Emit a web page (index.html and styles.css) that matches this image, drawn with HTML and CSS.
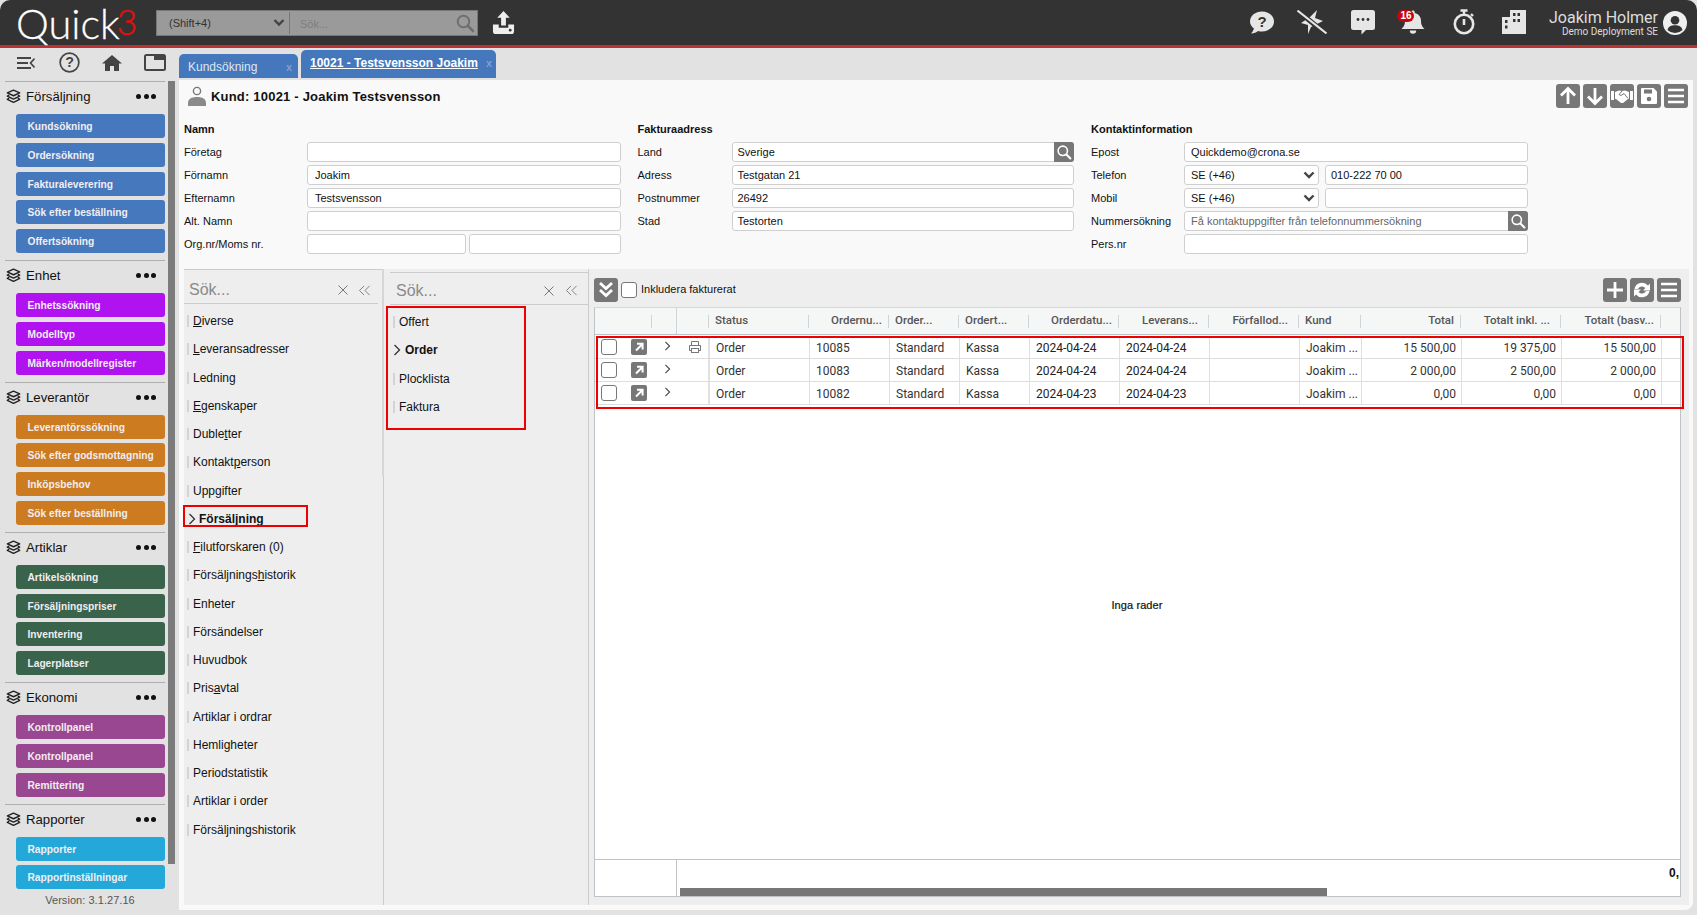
FILE: index.html
```html
<!DOCTYPE html>
<html lang="sv">
<head>
<meta charset="utf-8">
<title>Quick3</title>
<link rel="stylesheet" href="styles.css">
</head>
<body>
<svg class="defs" width="0" height="0" aria-hidden="true">
  <symbol id="layers" viewBox="0 0 16 16"><g fill="none" stroke="#222" stroke-width="1.5" stroke-linejoin="round"><path d="M8 1.2 14.6 4.2 8 7.2 1.4 4.2Z"/><path d="M3.4 6.4 1.4 7.6 8 10.7 14.6 7.6 12.6 6.4"/><path d="M3.4 9.8 1.4 11 8 14.2 14.6 11 12.6 9.8"/></g></symbol>
  <symbol id="chev" viewBox="0 0 8 12"><path d="M1.5 1 6.5 6 1.5 11" fill="none" stroke="currentColor" stroke-width="1.3"/></symbol>
  <symbol id="menu" viewBox="0 0 24 24"><path d="M4 6h16M4 12h16M4 18h16" stroke="#fff" stroke-width="2.4" fill="none"/></symbol>
  <symbol id="mag" viewBox="0 0 20 20"><circle cx="8.5" cy="8.5" r="5.8" fill="none" stroke="currentColor" stroke-width="2"/><path d="M13 13l5 5" stroke="currentColor" stroke-width="2.6" stroke-linecap="round"/></symbol>
  <symbol id="cross" viewBox="0 0 12 12"><path d="M1.5 1.5l9 9M10.5 1.5l-9 9" stroke="#777" stroke-width="1" fill="none"/></symbol>
  <symbol id="dbl" viewBox="0 0 14 12"><path d="M6.5 1 1.5 6l5 5M12.5 1l-5 5 5 5" stroke="#777" stroke-width="1" fill="none"/></symbol>
  <symbol id="selarrow" viewBox="0 0 12 8"><path d="M1.5 1.5 6 6l4.5-4.5" fill="none" stroke="#444" stroke-width="2.4"/></symbol>
  <symbol id="go" viewBox="0 0 16 16"><rect width="16" height="16" rx="2" fill="#777"/><path d="M5 11.5 11 5.5M6 4.8h5.6v5.6" stroke="#fff" stroke-width="2" fill="none"/></symbol>
</svg>

<header class="topbar">
  <div class="logo">Quick<span class="logo-3">3</span></div>
  <div class="search">
    <span class="search-scope">(Shift+4)</span>
    <svg class="search-arrow"><use href="#selarrow"/></svg>
    <span class="search-input">Sök...</span>
    <svg class="search-mag"><use href="#mag"/></svg>
  </div>
  <svg class="upload" viewBox="0 0 24 26"><path d="M12 1 5.5 8h4v8h5V8h4Z" fill="#eee"/><path d="M1 15h6v3.5h10V15h6v7a3 3 0 0 1-3 3H4a3 3 0 0 1-3-3Z" fill="#eee"/><circle cx="19" cy="21" r="1.4" fill="#333"/></svg>
  <div class="top-right">
    <svg class="ticon" viewBox="0 0 26 26"><path d="M13 2.500c6.600 0 12 4.300 12 10 0 5.600-5.400 10-12 10-1.400 0-2.700-.2-4-.6-1.600 1.300-3.800 2.300-7 2.500 1.500-1.400 2.600-3.200 2.900-4.900C2.500 17.700 1 15.300 1 12.500 1 6.800 6.400 2.500 13 2.500Z" fill="#e6e6e6"/><text x="13" y="18" class="ticon-q">?</text></svg>
    <svg class="ticon ticon-wide" viewBox="0 0 30 24"><path d="M20 0 18 8l8 3-12 6-3 7 0-9-7-2 9-6Z" fill="#e6e6e6"/><path d="M1 1 29 24" stroke="#333" stroke-width="5"/><path d="M.5.5 29.500 23.500" stroke="#e6e6e6" stroke-width="2"/></svg>
    <svg class="ticon" viewBox="0 0 26 26"><path d="M3.500 1h19A2.500 2.500 0 0 1 25 3.500v15a2.500 2.500 0 0 1-2.500 2.500H16l-4.500 4.500V21h-8A2.500 2.500 0 0 1 1 18.500v-15A2.500 2.500 0 0 1 3.500 1Z" fill="#e6e6e6"/><circle cx="8" cy="10.500" r="1.400" fill="#333"/><circle cx="13" cy="10.500" r="1.400" fill="#333"/><circle cx="18" cy="10.500" r="1.400" fill="#333"/></svg>
    <div class="bell">
      <svg class="ticon" viewBox="0 0 26 26"><path d="M13 1.500c1 0 1.700.7 1.700 1.700v.7c3.700.8 6.300 3.900 6.300 7.700 0 5 1.600 6.500 3.500 8.400H1.500C3.400 18.100 5 16.600 5 11.600c0-3.800 2.600-6.900 6.300-7.700v-.7c0-1 .7-1.700 1.700-1.700Z" fill="#e6e6e6"/><path d="M9.800 21.500h6.400a3.200 3.200 0 0 1-6.400 0Z" fill="#e6e6e6"/></svg>
      <span class="badge">16</span>
    </div>
    <svg class="ticon" viewBox="0 0 24 26"><circle cx="12" cy="15" r="9.200" fill="none" stroke="#e6e6e6" stroke-width="2.600"/><path d="M8.500 1.500h7M12 1.500v4M19 5l2 2" stroke="#e6e6e6" stroke-width="2.400" fill="none"/><path d="M12 10v6" stroke="#e6e6e6" stroke-width="2.600"/></svg>
    <svg class="ticon" viewBox="0 0 26 26"><path d="M9 1h16v24H1V8h8Z" fill="#e6e6e6"/><g fill="#333"><rect x="12" y="4" width="2.500" height="3"/><rect x="16.500" y="4" width="2.500" height="3"/><rect x="12" y="10" width="2.500" height="3"/><rect x="16.500" y="10" width="2.500" height="3"/><rect x="4" y="11" width="2.500" height="3"/><rect x="4" y="16.500" width="2.500" height="3"/></g></svg>
    <div class="user">
      <div class="user-name">Joakim Holmer</div>
      <div class="user-org">Demo Deployment SE</div>
    </div>
    <svg class="avatar" viewBox="0 0 24 24"><circle cx="12" cy="12" r="12" fill="#eee"/><circle cx="12" cy="9.300" r="4.300" fill="#333"/><path d="M4.500 19c.8-3.400 3.600-4.800 7.500-4.800s6.700 1.400 7.500 4.800A10.600 10.600 0 0 1 12 22a10.600 10.600 0 0 1-7.500-3Z" fill="#333"/></svg>
  </div>
</header>

<div class="main">
  <aside class="side">
    <div class="tools">
      <svg class="tool tool-collapse" viewBox="0 0 18 12"><path d="M0 1h14M0 6h11M0 11h14" stroke="#444" stroke-width="1.800"/><path d="M17.500 1.500 13.500 6l4 4.500" fill="none" stroke="#444" stroke-width="1.600"/></svg>
      <svg class="tool tool-help" viewBox="0 0 22 22"><circle cx="11" cy="11" r="9.800" fill="none" stroke="#444" stroke-width="1.800"/><text x="11" y="16" class="tool-q">?</text></svg>
      <svg class="tool tool-home" viewBox="0 0 20 16"><path d="M10 0 20 8.500h-3V16h-5v-5H8v5H3V8.500H0Z" fill="#444"/></svg>
      <svg class="tool tool-win" viewBox="0 0 22 17"><rect x="1" y="1" width="20" height="15" rx="1.500" fill="none" stroke="#444" stroke-width="2"/><rect x="10" y="1" width="11" height="5" fill="#444"/></svg>
    </div>
    <div class="side-body">
      <nav class="nav">
        <section class="group">
          <h3 class="group-head"><svg class="layers"><use href="#layers"/></svg><span class="group-title">Försäljning</span><span class="dots"><i></i><i></i><i></i></span></h3>
          <a class="navbtn c-blue">Kundsökning</a><a class="navbtn c-blue">Ordersökning</a><a class="navbtn c-blue">Fakturaleverering</a><a class="navbtn c-blue">Sök efter beställning</a><a class="navbtn c-blue">Offertsökning</a>
        </section>
        <section class="group">
          <h3 class="group-head"><svg class="layers"><use href="#layers"/></svg><span class="group-title">Enhet</span><span class="dots"><i></i><i></i><i></i></span></h3>
          <a class="navbtn c-mag">Enhetssökning</a><a class="navbtn c-mag">Modelltyp</a><a class="navbtn c-mag">Märken/modellregister</a>
        </section>
        <section class="group">
          <h3 class="group-head"><svg class="layers"><use href="#layers"/></svg><span class="group-title">Leverantör</span><span class="dots"><i></i><i></i><i></i></span></h3>
          <a class="navbtn c-ora">Leverantörssökning</a><a class="navbtn c-ora">Sök efter godsmottagning</a><a class="navbtn c-ora">Inköpsbehov</a><a class="navbtn c-ora">Sök efter beställning</a>
        </section>
        <section class="group">
          <h3 class="group-head"><svg class="layers"><use href="#layers"/></svg><span class="group-title">Artiklar</span><span class="dots"><i></i><i></i><i></i></span></h3>
          <a class="navbtn c-grn">Artikelsökning</a><a class="navbtn c-grn">Försäljningspriser</a><a class="navbtn c-grn">Inventering</a><a class="navbtn c-grn">Lagerplatser</a>
        </section>
        <section class="group">
          <h3 class="group-head"><svg class="layers"><use href="#layers"/></svg><span class="group-title">Ekonomi</span><span class="dots"><i></i><i></i><i></i></span></h3>
          <a class="navbtn c-pur">Kontrollpanel</a><a class="navbtn c-pur">Kontrollpanel</a><a class="navbtn c-pur">Remittering</a>
        </section>
        <section class="group group-last">
          <h3 class="group-head"><svg class="layers"><use href="#layers"/></svg><span class="group-title">Rapporter</span><span class="dots"><i></i><i></i><i></i></span></h3>
          <a class="navbtn c-cya">Rapporter</a><a class="navbtn c-cya">Rapportinställningar</a>
        </section>
        <div class="version">Version: 3.1.27.16</div>
      </nav>
      <div class="side-scroll"></div>
    </div>
  </aside>

  <div class="work">
    <div class="tabs">
      <div class="tab tab-off"><span>Kundsökning</span><span class="tab-x">x</span></div>
      <div class="tab tab-on"><span class="tab-label">10021 - Testsvensson Joakim</span><span class="tab-x">x</span></div>
    </div>
    <div class="panel">
      <div class="titlebar">
        <div class="title">
          <svg class="title-icon" viewBox="0 0 18 20"><circle cx="9" cy="5" r="3.600" fill="none" stroke="#777" stroke-width="1.400"/><path d="M0 20v-3c0-4 3.500-6 9-6s9 2 9 6v3Z" fill="#8a8a8a"/></svg>
          <span>Kund: 10021 - Joakim Testsvensson</span>
        </div>
        <div class="btns">
          <div class="gbtn"><svg viewBox="0 0 24 24"><path d="M12 20V5M5 11.500 12 4.500l7 7" stroke="#fff" stroke-width="2.800" fill="none"/></svg></div>
          <div class="gbtn"><svg viewBox="0 0 24 24"><path d="M12 4v15M5 12.500l7 7 7-7" stroke="#fff" stroke-width="2.800" fill="none"/></svg></div>
          <div class="gbtn"><svg viewBox="0 0 24 24"><path d="M1 7h3v9H1ZM20 7h3v9h-3Z" fill="#fff"/><path d="M5 8l4-1.500 3 .5 3-.5 4 1.500v7l-1 0-5 4-2 0-5-4-1 0Z" fill="#fff"/><path d="M12 7l-3 3.500 2 1 3-2 4 5" stroke="#777" stroke-width="1" fill="none"/></svg></div>
          <div class="gbtn"><svg viewBox="0 0 24 24"><path d="M5 4h11.500L20 7.500V19a1 1 0 0 1-1 1H5a1 1 0 0 1-1-1V5a1 1 0 0 1 1-1Z" fill="#fff"/><rect x="7" y="5.500" width="8" height="4" fill="#777"/><circle cx="12" cy="15" r="2.300" fill="#777"/></svg></div>
          <div class="gbtn"><svg><use href="#menu"/></svg></div>
        </div>
      </div>

      <div class="form">
        <div class="fcol fcol-a">
          <h4 class="fhead">Namn</h4>
          <label class="flabel">Företag</label><div class="finput"></div>
          <label class="flabel">Förnamn</label><div class="finput">Joakim</div>
          <label class="flabel">Efternamn</label><div class="finput">Testsvensson</div>
          <label class="flabel">Alt. Namn</label><div class="finput"></div>
          <label class="flabel">Org.nr/Moms nr.</label><div class="fpair fpair-org"><div class="finput"></div><div class="finput"></div></div>
        </div>
        <div class="fcol fcol-b">
          <h4 class="fhead">Fakturaadress</h4>
          <label class="flabel">Land</label><div class="finput finput-btn">Sverige<span class="fsearch"><svg><use href="#mag"/></svg></span></div>
          <label class="flabel">Adress</label><div class="finput">Testgatan 21</div>
          <label class="flabel">Postnummer</label><div class="finput">26492</div>
          <label class="flabel">Stad</label><div class="finput">Testorten</div>
        </div>
        <div class="fcol fcol-c">
          <h4 class="fhead">Kontaktinformation</h4>
          <label class="flabel">Epost</label><div class="finput">Quickdemo@crona.se</div>
          <label class="flabel">Telefon</label><div class="fpair fpair-tel"><div class="finput fselect">SE (+46)<svg><use href="#selarrow"/></svg></div><div class="finput">010-222 70 00</div></div>
          <label class="flabel">Mobil</label><div class="fpair fpair-tel"><div class="finput fselect">SE (+46)<svg><use href="#selarrow"/></svg></div><div class="finput"></div></div>
          <label class="flabel">Nummersökning</label><div class="finput finput-btn finput-ph">Få kontaktuppgifter från telefonnummersökning<span class="fsearch"><svg><use href="#mag"/></svg></span></div>
          <label class="flabel">Pers.nr</label><div class="finput"></div>
        </div>
      </div>

      <div class="lower">
        <div class="pane pane-1">
          <div class="findrow"><span class="find-ph">Sök...</span><svg class="find-x"><use href="#cross"/></svg><svg class="find-dbl"><use href="#dbl"/></svg></div>
          <ul class="list">
            <li class="item"><u>D</u>iverse</li>
            <li class="item"><u>L</u>everansadresser</li>
            <li class="item">Ledning</li>
            <li class="item"><u>E</u>genskaper</li>
            <li class="item">Duble<u>t</u>ter</li>
            <li class="item">Kontakt<u>p</u>erson</li>
            <li class="item">Uppgifter</li>
            <li class="item item-on item-boxed"><svg class="item-chev"><use href="#chev"/></svg>Försäljning</li>
            <li class="item"><u>F</u>ilutforskaren (0)</li>
            <li class="item">Försäljnings<u>h</u>istorik</li>
            <li class="item">Enheter</li>
            <li class="item">Försändelser</li>
            <li class="item">Huvudbok</li>
            <li class="item">Pris<u>a</u>vtal</li>
            <li class="item">Artiklar i ordrar</li>
            <li class="item">Hemligheter</li>
            <li class="item">Periodstatistik</li>
            <li class="item">Artiklar i order</li>
            <li class="item">Försäljningshistorik</li>
          </ul>
        </div>
        <div class="pane pane-2">
          <div class="findrow"><span class="find-ph">Sök...</span><svg class="find-x"><use href="#cross"/></svg><svg class="find-dbl"><use href="#dbl"/></svg></div>
          <ul class="list list-boxed">
            <li class="item">Offert</li>
            <li class="item item-on"><svg class="item-chev"><use href="#chev"/></svg>Order</li>
            <li class="item">Plocklista</li>
            <li class="item">Faktura</li>
          </ul>
        </div>
        <div class="pane pane-3">
          <div class="tbar">
            <div class="gbtn"><svg viewBox="0 0 24 24"><path d="M6 5l6 5.500L18 5M6 12l6 5.500 6-5.500" stroke="#fff" stroke-width="2.800" fill="none"/></svg></div>
            <span class="check"></span>
            <span class="tbar-label">Inkludera fakturerat</span>
            <div class="btns tbar-btns">
              <div class="gbtn"><svg viewBox="0 0 24 24"><path d="M12 4v16M4 12h16" stroke="#fff" stroke-width="2.800"/></svg></div>
              <div class="gbtn"><svg viewBox="0 0 24 24"><path d="M4.500 11A7.700 7.700 0 0 1 18 7.500L20 5.500v7h-7l2.400-2.400A4.500 4.500 0 0 0 8 11Z" fill="#fff"/><path d="M19.500 13A7.700 7.700 0 0 1 6 16.500L4 18.500v-7h7l-2.400 2.400A4.500 4.500 0 0 0 16 13Z" fill="#fff"/></svg></div>
              <div class="gbtn"><svg><use href="#menu"/></svg></div>
            </div>
          </div>
          <div class="grid">
            <div class="ghead cols">
              <div class="gh gh-sep"></div>
              <div class="gh gh-pin"></div>
              <div class="gh gh-sep"></div>
              <div class="gh gh-sep">Status</div>
              <div class="gh gh-sep gh-r">Ordernu...</div>
              <div class="gh gh-sep">Order...</div>
              <div class="gh gh-sep">Ordert...</div>
              <div class="gh gh-sep gh-r">Orderdatu...</div>
              <div class="gh gh-sep gh-r gh-tight">Leverans...</div>
              <div class="gh gh-sep gh-r gh-tight">Förfallod...</div>
              <div class="gh gh-sep">Kund</div>
              <div class="gh gh-sep gh-r">Total</div>
              <div class="gh gh-sep gh-r gh-tight">Totalt inkl. ...</div>
              <div class="gh gh-sep gh-r">Totalt (basv...</div>
              <div class="gh"></div>
            </div>
            <div class="gbody">
              <div class="rows">
                <div class="grow cols">
                  <div class="gc gc-pin"><span class="check"></span><svg class="go"><use href="#go"/></svg></div>
                  <div class="gc gc-pin gc-chev"><svg class="row-chev"><use href="#chev"/></svg></div>
                  <div class="gc gc-pin gc-print"><svg class="print" viewBox="0 0 14 14"><path d="M3.500 5V1.500h7V5M3.500 10.500H1.500V5.500h11v5h-2" fill="none" stroke="#777" stroke-width="1"/><rect x="3.500" y="8.500" width="7" height="4" fill="none" stroke="#777" stroke-width="1"/></svg></div>
                  <div class="gc">Order</div><div class="gc">10085</div><div class="gc">Standard</div><div class="gc">Kassa</div><div class="gc gc-d">2024-04-24</div><div class="gc gc-d">2024-04-24</div><div class="gc"></div><div class="gc">Joakim ...</div><div class="gc gc-r">15 500,00</div><div class="gc gc-r">19 375,00</div><div class="gc gc-r">15 500,00</div><div class="gc"></div>
                </div>
                <div class="grow cols">
                  <div class="gc gc-pin"><span class="check"></span><svg class="go"><use href="#go"/></svg></div>
                  <div class="gc gc-pin gc-chev"><svg class="row-chev"><use href="#chev"/></svg></div>
                  <div class="gc gc-pin gc-print"></div>
                  <div class="gc">Order</div><div class="gc">10083</div><div class="gc">Standard</div><div class="gc">Kassa</div><div class="gc gc-d">2024-04-24</div><div class="gc gc-d">2024-04-24</div><div class="gc"></div><div class="gc">Joakim ...</div><div class="gc gc-r">2 000,00</div><div class="gc gc-r">2 500,00</div><div class="gc gc-r">2 000,00</div><div class="gc"></div>
                </div>
                <div class="grow cols">
                  <div class="gc gc-pin"><span class="check"></span><svg class="go"><use href="#go"/></svg></div>
                  <div class="gc gc-pin gc-chev"><svg class="row-chev"><use href="#chev"/></svg></div>
                  <div class="gc gc-pin gc-print"></div>
                  <div class="gc">Order</div><div class="gc">10082</div><div class="gc">Standard</div><div class="gc">Kassa</div><div class="gc gc-d">2024-04-23</div><div class="gc gc-d">2024-04-23</div><div class="gc"></div><div class="gc">Joakim ...</div><div class="gc gc-r">0,00</div><div class="gc gc-r">0,00</div><div class="gc gc-r">0,00</div><div class="gc"></div>
                </div>
              </div>
              <div class="empty">Inga rader</div>
            </div>
            <div class="gfoot">
              <div class="gfoot-pin"></div>
              <div class="gfoot-main">
                <div class="gfoot-val">0,</div>
                <div class="hscroll"></div>
              </div>
            </div>
          </div>
        </div>
      </div>
    </div>
  </div>
</div>
</body>
</html>
```

FILE: styles.css
```css
*, *::before, *::after { box-sizing: border-box; }
html, body { margin: 0; padding: 0; height: 915px; overflow: hidden; }
body {
  width: 1697px;
  background: #e2e2e2;
  font-family: "Liberation Sans", Arial, sans-serif;
  font-size: 11px;
  color: #111;
}
.defs { position: absolute; }
h3, h4, ul { margin: 0; padding: 0; }
ul { list-style: none; }

/* Top bar */
.topbar {
  height: 48px;
  background: #333;
  border-bottom: 3px solid #bf3030;
  border-top-left-radius: 10px;
  border-top-right-radius: 10px;
  display: flex;
  align-items: center;
  padding-left: 16px;
  padding-right: 10px;
}
.logo {
  width: 140px;
  font-family: Lato, sans-serif;
  font-weight: 300;
  font-size: 41.5px;
  line-height: 45px;
  color: #fff;
  -webkit-text-stroke: 0.3px #fff;
  white-space: nowrap;
}
.logo-3 { color: #e01010; -webkit-text-stroke: 0.5px #e01010; font-size: 35px; vertical-align: 4px; margin-left: -3px; }
.search {
  width: 322px;
  height: 26px;
  background: #9a9a9a;
  border: 1px solid #777;
  display: flex;
  align-items: center;
  padding-left: 12px;
  color: #333;
  font-size: 11px;
}
.search-scope { width: 104px; }
.search-arrow { width: 12px; height: 9px; }
.search-input {
  margin-left: 4px;
  border-left: 1px solid #777;
  padding-left: 10px;
  height: 22px;
  line-height: 24px;
  color: #7e7e7e;
  flex: 1;
}
.search-mag { width: 20px; height: 20px; color: #6f6f6f; margin-right: 2px; }
.upload { width: 23px; height: 25px; margin-left: 14px; margin-bottom: 1px; }
.top-right { margin-left: auto; display: flex; align-items: center; }
.ticon { width: 26px; height: 26px; display: block; }
.top-right > .ticon, .bell { margin-right: 24.5px; margin-bottom: 1px; }
.top-right > .ticon-wide { width: 30px; height: 24px; margin-left: -2px; margin-right: 22.5px; }
.ticon-q { font: bold 15px "Liberation Sans", sans-serif; fill: #333; text-anchor: middle; }
.bell { position: relative; }
.badge {
  position: absolute;
  left: -3px;
  top: 1px;
  min-width: 17px;
  height: 12px;
  border-radius: 7px;
  background: #c4070f;
  color: #fff;
  font-size: 10px;
  font-weight: 700;
  line-height: 12px;
  text-align: center;
}
.user { text-align: right; font-family: Roboto, sans-serif; color: #ddd; margin-left: -3px; padding-top: 1px; }
.user-name { font-size: 16px; line-height: 18px; }
.user-org { font-size: 10px; line-height: 10px; }
.avatar { width: 24px; height: 24px; margin-left: 5px; }

/* Layout */
.main { display: flex; height: 867px; }
.side { width: 179px; flex: none; }
.tools {
  height: 33px;
  display: flex;
  align-items: center;
  padding-left: 17px;
  padding-bottom: 4px;
}
.tool { display: block; flex: none; }
.tool-collapse { width: 18px; height: 12px; }
.tool-help { width: 21px; height: 21px; margin-left: 24px; }
.tool-home { width: 20px; height: 16px; margin-left: 22px; }
.tool-win { width: 22px; height: 17px; margin-left: 22px; }
.tool-q { font: bold 15px "Liberation Sans", sans-serif; fill: #444; text-anchor: middle; }
.side-body { display: flex; }
.nav { width: 165px; padding-left: 5px; flex: none; }
.side-scroll { width: 7px; height: 783px; background: #7b7b7b; margin-left: 3px; }
.group { border-top: 1px solid #aeaeae; padding-bottom: 7px; }
.group-last { padding-bottom: 0; }
.group-head {
  height: 32px;
  display: flex;
  align-items: center;
  font-weight: 400;
  padding-left: 1px;
  padding-bottom: 3px;
}
.layers { width: 15px; height: 15px; }
.group-title { font-size: 13.2px; margin-left: 5px; color: #111; flex: 1; }
.dots { display: flex; gap: 2.5px; margin-right: 9px; }
.dots i { width: 5px; height: 5px; border-radius: 50%; background: #111; display: block; }
.navbtn {
  display: block;
  height: 24px;
  margin-left: 11px;
  margin-bottom: 4.75px;
  border-radius: 3px;
  color: #f1eef2;
  font-weight: 700;
  font-size: 10.2px;
  line-height: 25px;
  padding-left: 11.5px;
  white-space: nowrap;
}
.navbtn:last-child { margin-bottom: 0; }
.c-blue { background: #4678bd; }
.c-mag { background: #b013ef; }
.c-ora { background: #cc7b20; }
.c-grn { background: #39634a; }
.c-pur { background: #9a4791; }
.c-cya { background: #23a8d9; }
.version { text-align: center; color: #555; font-size: 11px; letter-spacing: 0.05px; margin-top: 5px; line-height: 13px; padding-left: 10px; }

/* Work area */
.work { width: 1514px; flex: none; }
.tabs { height: 32px; display: flex; align-items: flex-end; padding-bottom: 2px; gap: 3px; }
.tab {
  background: #4477bb;
  color: #dfe7f4;
  font-size: 12px;
  border-radius: 5px 5px 0 0;
  display: flex;
  justify-content: space-between;
  align-items: center;
}
.tab-off { width: 119px; height: 24px; padding: 2px 6px 0 9px; }
.tab-on { width: 195px; height: 28px; padding: 0 4px 2px 9px; font-weight: 700; color: #fff; }
.tab-label { text-decoration: underline; }
.tab-x { color: #7f9fcf; font-weight: 700; font-size: 11px; }
.panel { background: #f9f9f9; height: 830px; border-bottom-right-radius: 8px; display: flex; flex-direction: column; }
.titlebar {
  height: 39px;
  padding: 4px 5px 0 9px;
  display: flex;
  justify-content: space-between;
  flex: none;
}
.title { display: flex; align-items: center; font-weight: 700; font-size: 13px; height: 24px; letter-spacing: 0.2px; }
.title-icon { width: 18px; height: 20px; margin-right: 5px; }
.btns { display: flex; gap: 3px; }
.gbtn { width: 24px; height: 24px; border-radius: 3px; background: #777; flex: none; }
.gbtn svg { width: 24px; height: 24px; display: block; }

/* Form */
.form { display: grid; grid-template-columns: repeat(3, 437px); column-gap: 16.5px; padding-left: 5px; height: 150px; flex: none; }
.fcol { display: grid; grid-auto-rows: 20px; row-gap: 3px; align-items: center; align-content: start; }
.fcol-a { grid-template-columns: 123px 314px; }
.fcol-b { grid-template-columns: 94px 342px; }
.fcol-c { grid-template-columns: 93px 344px; }
.fhead { grid-column: 1 / -1; font-size: 11px; font-weight: 700; height: 19px; line-height: 19px; }
.flabel { font-size: 11px; color: #111; white-space: nowrap; }
.finput {
  height: 20px;
  background: #fff;
  border: 1px solid #cfcfcf;
  border-radius: 3px;
  line-height: 18px;
  padding-left: 7px;
  font-size: 11px;
  position: relative;
  min-width: 0;
}
.fcol-b .finput { padding-left: 5px; }
.fcol-c .finput { padding-left: 6px; }
.fcol-c .fpair .finput + .finput { padding-left: 5px; }
.finput-ph { color: #666; }
.fpair { display: grid; height: 20px; }
.fpair-org { grid-template-columns: 159px 152px; column-gap: 3px; }
.fpair-tel { grid-template-columns: 135px 203px; column-gap: 6px; }
.fselect svg { position: absolute; right: 3px; top: 5px; width: 12px; height: 8px; }
.fsearch {
  position: absolute;
  right: -1px;
  top: -1px;
  width: 20px;
  height: 20px;
  background: #777;
  border-radius: 0 3px 3px 0;
  color: #fff;
  display: flex;
  align-items: center;
  justify-content: center;
}
.fsearch svg { width: 16px; height: 16px; }

/* Lower panes */
.lower { margin: 0 4px 0 5px; height: 636px; background: #eee; display: flex; flex: none; }
.pane { flex: none; }
.pane-1 { width: 200px; border-right: 1px solid #ccc; box-shadow: inset 0 1px 0 #ccc; padding-top: 1px; position: relative; }
.pane-1::after { content: ""; position: absolute; right: -1px; top: 0; width: 2px; height: 207px; background: #d6d6d6; }
.pane-2 { width: 205px; border-right: 1px solid #ccc; padding-top: 3px; }
.pane-3 { flex: 1; padding: 3px 8px 8px 5px; }
.findrow {
  height: 34px;
  margin-right: 5px;
  border-bottom: 1px solid #ccc;
  display: flex;
  align-items: center;
  padding: 7px 0 0 5px;
}
.pane-2 .findrow { margin-left: 6px; margin-right: 0; border-top: 1px solid #ccc; height: 33px; padding: 4px 0 0 6px; }
.find-ph { font-size: 16px; color: #8a8a8a; flex: 1; }
.find-x { width: 12px; height: 12px; margin-right: 9px; }
.find-dbl { width: 13px; height: 11px; margin-right: 7px; }
.pane-2 .find-x { margin-right: 10px; }
.pane-2 .find-dbl { margin-right: 10px; }
.list { padding-top: 3px; }
.item {
  height: 28.25px;
  line-height: 28px;
  font-size: 12px;
  padding-left: 9px;
  position: relative;
  color: #111;
  white-space: nowrap;
}
.item::before {
  content: "";
  position: absolute;
  left: 3px;
  top: 8px;
  width: 2px;
  height: 12px;
  background: #d4d4d4;
}
.item-on { font-weight: 700; padding-left: 15px; }
.item-on::before { display: none; }
.item-chev { position: absolute; left: 4px; top: 8px; width: 8px; height: 12px; color: #333; }
.item-boxed::after {
  content: "";
  position: absolute;
  left: -1px;
  top: 0;
  width: 125px;
  height: 22px;
  border: 2px solid #e00;
}
.list-boxed {
  margin: 1px 0 0 2px;
  width: 140px;
  height: 124px;
  border: 2px solid #e00;
  padding-top: 0;
}
.list-boxed .item { padding-left: 11px; }
.list-boxed .item::before { left: 5px; }
.list-boxed .item-on { padding-left: 17px; }
.list-boxed .item-chev { left: 5px; }

/* Grid */
.tbar { height: 35px; display: flex; align-items: center; padding-top: 1px; }
.check { display: block; width: 16px; height: 16px; border: 1px solid #777; border-radius: 3px; background: #fff; flex: none; }
.tbar .check { margin-left: 3px; }
.tbar-label { margin-left: 4px; margin-bottom: 2px; font-size: 11px; color: #111; }
.tbar-btns { margin-left: auto; }
.grid {
  height: 590px;
  background: #fff;
  border: 1px solid #bdc3c7;
  border-top-color: #d5d9db;
  display: flex;
  flex-direction: column;
  width: 1087px;
}
.cols { display: grid; grid-template-columns: 57px 25px 32px 100px 80px 70px 70px 90px 90px 90px 62px 100px 100px 100px 19px; }
.ghead { height: 27px; background: #f5f7f7; border-bottom: 1px solid #bdc3c7; flex: none; }
.gh {
  font-family: Roboto, sans-serif;
  font-weight: 500;
  font-size: 11.5px;
  color: #555;
  line-height: 25px;
  padding: 0 6px;
  position: relative;
  white-space: nowrap;
  overflow: hidden;
}
.gh-r { text-align: right; padding-right: 7px; }
.gh-tight { padding-right: 11px; }
.gh-pin { border-right: 1px solid #cfd4d6; }
.gh-sep::after {
  content: "";
  position: absolute;
  right: 0;
  top: 7px;
  height: 13px;
  width: 1px;
  background: #cfd4d6;
}
.gbody { flex: 1; position: relative; }
.rows { position: relative; padding-top: 1px; }
.rows::after {
  content: "";
  position: absolute;
  left: 1px;
  top: 1px;
  width: 1088px;
  height: 73px;
  border: 2px solid #e00;
}
.grow { height: 23px; }
.gc {
  font-family: Roboto, sans-serif;
  font-size: 12px;
  color: #333;
  line-height: 24px;
  padding: 0 6px;
  border-left: 1px solid #e0e0e0;
  border-bottom: 1px solid #ddd;
  white-space: nowrap;
  overflow: hidden;
  min-width: 0;
}
.gc-d { color: #222; }
.gc-r { text-align: right; padding-right: 5px; }
.gc-pin { border-left: 0; padding: 0; display: flex; align-items: center; }
.gc-pin .check { margin-left: 6px; }
.go { width: 16px; height: 16px; margin-left: 14px; }
.gc-chev { padding-left: 12px; color: #444; }
.row-chev { width: 7px; height: 10px; margin-bottom: 2px; }
.gc-print { padding-left: 11px; border-right: 1px solid #e0e0e0; }
.print { width: 14px; height: 14px; }
.empty { position: absolute; left: 0; right: 0; top: 264px; text-align: center; font-size: 11px; letter-spacing: 0.1px; margin-left: -1px; color: #111; -webkit-text-stroke: 0.2px #111; }
.gfoot { height: 37px; border-top: 1px solid #bdc3c7; display: flex; flex: none; }
.gfoot-pin { width: 82px; border-right: 1px solid #bdc3c7; flex: none; }
.gfoot-main { flex: 1; min-width: 0; display: flex; flex-direction: column; justify-content: space-between; }
.gfoot-val { height: 27px; padding-left: 992px; font-weight: 700; font-size: 12px; line-height: 26px; white-space: nowrap; }
.hscroll { width: 647px; height: 8px; margin-left: 3px; background: #777; }
```
